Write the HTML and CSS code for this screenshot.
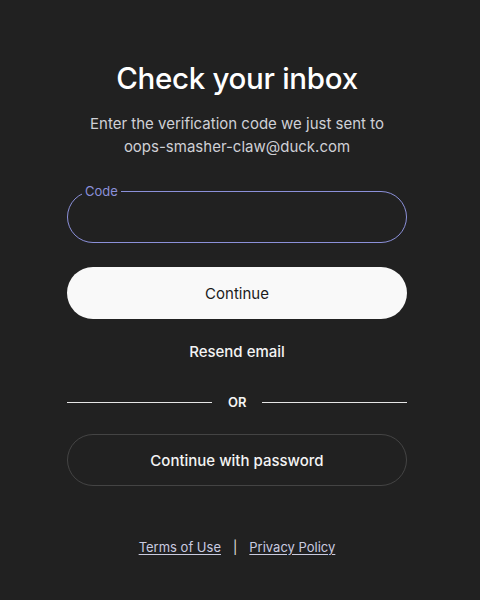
FILE: index.html
```html
<!DOCTYPE html>
<html lang="en">

<head>
  <meta charset="UTF-8">
  <meta name="viewport" content="width=device-width, initial-scale=1.0">
  <title>Check your inbox</title>
  <link rel="stylesheet" href="styles.css">
</head>

<body>

  <!-- Verification step -->
  <main class="verify">
    <h1 class="verify-title">Check your inbox</h1>
    <p class="verify-text">Enter the verification code we just sent to oops-smasher-claw@duck.com</p>

    <!-- Code input with floating label -->
    <div class="code-field">
      <label for="code">Code</label>
      <input type="text" id="code" inputmode="numeric" autocomplete="one-time-code">
    </div>

    <button class="btn btn-primary">Continue</button>

    <button class="link-button">Resend email</button>

    <div class="divider">
      <span class="divider-line"></span>
      <span class="divider-text">OR</span>
      <span class="divider-line"></span>
    </div>

    <button class="btn btn-outline">Continue with password</button>

    <!-- Footer links -->
    <footer class="legal">
      <a href="#">Terms of Use</a>
      <span class="legal-sep">|</span>
      <a href="#">Privacy Policy</a>
    </footer>
  </main>

</body>

</html>
```

FILE: styles.css
```css
/* Reset styles */
* {
  margin: 0;
  padding: 0;
  box-sizing: border-box;
}

body {
  background: #212121;
  color: #ececec;
  font-family: Inter, 'Noto Sans', sans-serif;
  padding-right: 6px;
}

/* Centered column */
.verify {
  width: 340px;
  margin: 0 auto;
  padding-top: 59px;
  display: flex;
  flex-direction: column;
  align-items: stretch;
  text-align: center;
}

.verify-title {
  font-size: 29.5px;
  font-weight: 500;
  letter-spacing: -0.3px;
  color: #fff;
  line-height: 38px;
}

.verify-text {
  margin-top: 15px;
  padding: 0 18px;
  font-size: 15px;
  line-height: 23px;
  color: #cfd0d6;
}

/* Code input */
.code-field {
  position: relative;
  margin-top: 33px;
  height: 52px;
  border: 1px solid #8b90d9;
  border-radius: 26px;
  padding: 0 18px;
  text-align: left;
}

.code-field label {
  position: absolute;
  top: -9px;
  left: 14px;
  padding: 0 3px;
  background: #212121;
  font-size: 13px;
  line-height: 16px;
  color: #8b90d9;
}

.code-field input {
  width: 100%;
  height: 100%;
  background: transparent;
  border: none;
  outline: none;
  color: #fff;
  font-size: 15px;
  font-family: inherit;
}

/* Buttons */
.btn {
  height: 52px;
  border-radius: 26px;
  font-family: inherit;
  font-size: 15px;
  cursor: pointer;
}

.btn-primary {
  margin-top: 24px;
  background: #f9f9f9;
  color: #1b1b1b;
  border: none;
}

.btn-outline {
  margin-top: 24px;
  background: transparent;
  color: #f4f4f4;
  border: 1px solid #444;
  font-weight: 500;
}

.link-button {
  margin-top: 23px;
  align-self: center;
  background: none;
  border: none;
  color: #f4f4f4;
  font-family: inherit;
  font-size: 15px;
  font-weight: 500;
  line-height: 20px;
  cursor: pointer;
}

/* OR divider */
.divider {
  margin-top: 32px;
  display: flex;
  align-items: center;
  gap: 16px;
}

.divider-line {
  flex: 1;
  height: 1px;
  background: #e6e6e6;
}

.divider-text {
  font-size: 13px;
  font-weight: 600;
  color: #f4f4f4;
  line-height: 16px;
  width: 18px;
}

/* Terms / privacy */
.legal {
  margin-top: 52px;
  display: flex;
  justify-content: center;
  align-items: center;
  gap: 12px;
  font-size: 13px;
  line-height: 18px;
}

.legal a {
  color: #c9cbe0;
  text-decoration: underline;
  text-underline-offset: 2px;
}

.legal-sep {
  color: #e0e0e0;
}
```
